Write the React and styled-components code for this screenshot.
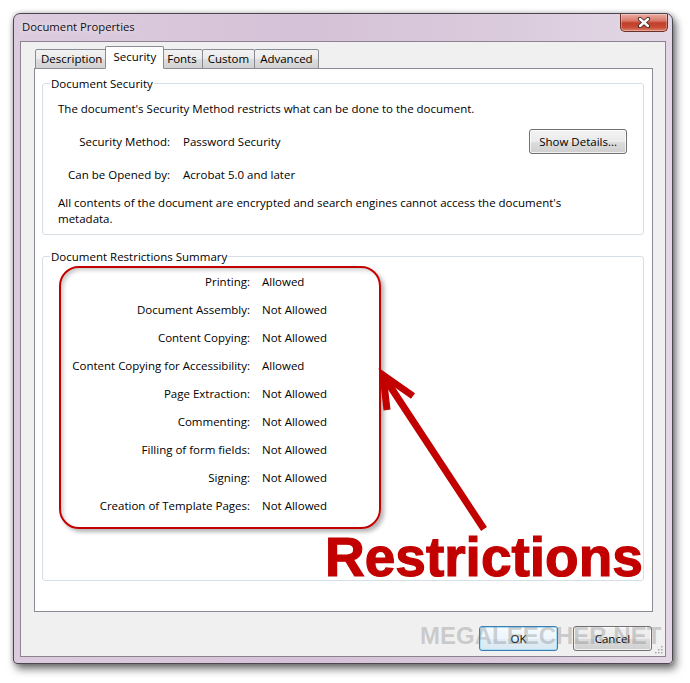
import React from 'react'
import styled, { createGlobalStyle } from 'styled-components'

const GlobalStyle = createGlobalStyle`
  html, body { margin: 0; padding: 0; background: #fff; }
  body {
    font-family: "Open Sans", "Noto Sans", sans-serif;
    font-size: 11.5px;
    color: #000;
  }
`

const Screen = styled.div`
  position: relative;
  width: 690px;
  height: 683px;
  box-sizing: border-box;
  padding: 13px 0 0 13px;
  overflow: hidden;
`

const Window = styled.div`
  width: 660px;
  height: 651px;
  box-sizing: border-box;
  border: 1px solid #4b4650;
  border-radius: 7px 7px 4px 4px;
  background: linear-gradient(90deg, #dccbde 0%, #d6c2d8 45%, #d9c9db 70%, #e3d7e5 100%);
  box-shadow: 3px 5px 9px rgba(0, 0, 0, 0.55), 0 0 5px rgba(0, 0, 0, 0.25);
  display: flex;
  flex-direction: column;
`

const TitleBar = styled.div`
  height: 27px;
  display: flex;
  justify-content: space-between;
  align-items: flex-start;
  padding: 0 4px 0 8px;
`

const Title = styled.span`
  font-size: 11.3px;
  line-height: 25px;
  color: #111;
  text-shadow: 0 0 6px rgba(255, 255, 255, 0.9);
`

const CloseButton = styled.div`
  width: 48px;
  height: 18px;
  box-sizing: border-box;
  border: 1px solid #6e2f28;
  border-top: none;
  border-radius: 0 0 5px 5px;
  background: linear-gradient(180deg, #e9ada0 0%, #d9786a 40%, #c2402a 52%, #c74a33 78%, #dd8672 100%);
  box-shadow: inset 0 0 0 1px rgba(255, 255, 255, 0.3);
  display: flex;
  align-items: center;
  justify-content: center;
`

const Client = styled.div`
  position: relative;
  flex: 1;
  margin: 0 6px 6px;
  background: #f0f0f0;
  border: 1px solid #8d8290;
  padding: 4px 12px 0 13px;
  display: flex;
  flex-direction: column;
`

const TabStrip = styled.div`
  display: flex;
  align-items: flex-end;
  height: 23px;
  padding-left: 1px;
  margin-bottom: -1px;
  position: relative;
  z-index: 1;
`

const Tab = styled.div`
  box-sizing: border-box;
  height: ${p => (p.$active ? 23 : 20)}px;
  line-height: ${p => (p.$active ? 19 : 18)}px;
  padding: 0 ${p => (p.$active ? 7 : 5)}px;
  margin: 0 ${p => (p.$active ? -2 : 0)}px 0 ${p => (p.$first ? 0 : p.$active ? -3 : -1)}px;
  border: 1px solid #898c95;
  border-bottom: ${p => (p.$active ? '1px solid #fff' : '1px solid #898c95')};
  border-radius: 2px 2px 0 0;
  background: ${p =>
    p.$active ? '#fff' : 'linear-gradient(180deg, #f2f2f2 0%, #ebebeb 50%, #dddddd 51%, #d2d2d2 100%)'};
  position: relative;
  z-index: ${p => (p.$active ? 2 : 1)};
`

const Panel = styled.div`
  height: 544px;
  box-sizing: border-box;
  background: #fff;
  border: 1px solid #898c95;
  padding: 7px 8px 30px 7px;
  display: flex;
  flex-direction: column;
`

const Group = styled.fieldset`
  margin: ${p => (p.$spaced ? '14px 0 0' : '0')};
  padding: 0;
  min-width: 0;
  border: 1px solid #d5dfe5;
  border-radius: 3px;
  ${p => p.$grow && 'flex: 1;'}
`

const Legend = styled.legend`
  margin-left: 7px;
  padding: 0 1px;
  line-height: 15px;
`

const GroupBody = styled.div`
  padding: 10px 16px 7px 15px;
`

const Line = styled.div`
  line-height: 16px;
`

const DetailGrid = styled.div`
  display: grid;
  grid-template-columns: 112px 1fr auto;
  column-gap: 13px;
  row-gap: 13px;
  align-items: center;
  margin: 12px 0;
  line-height: 16px;
`

const FieldLabel = styled.span`
  text-align: right;
  white-space: nowrap;
`

const Button = styled.button`
  height: 25px;
  min-width: ${p => p.$min || 0}px;
  box-sizing: border-box;
  padding: 0 9px;
  font: inherit;
  color: #000;
  border: 1px solid ${p => (p.$default ? '#3c7fb1' : '#707070')};
  border-radius: 3px;
  background: ${p =>
    p.$default
      ? 'linear-gradient(180deg, #f4fafd 0%, #eef6fb 50%, #e2eef6 51%, #d9e8f2 100%)'
      : 'linear-gradient(180deg, #f2f2f2 0%, #ebebeb 50%, #dddddd 51%, #cfcfcf 100%)'};
  box-shadow: inset 0 0 0 1px ${p => (p.$default ? '#a9dcf5' : 'rgba(255,255,255,0.75)')};
`

const RedBox = styled.div`
  margin: 2px 0 0 16px;
  width: 322px;
  box-sizing: border-box;
  border: 2px solid #c20000;
  border-radius: 20px;
  padding: 0 0 7px;
  display: grid;
  grid-template-columns: 189px auto;
  column-gap: 12px;
  line-height: 28px;
  box-shadow: 3px 3px 4px rgba(0, 0, 0, 0.3), inset 3px 3px 4px -1px rgba(0, 0, 0, 0.22);
`

const Footer = styled.div`
  display: flex;
  justify-content: flex-end;
  gap: 15px;
  margin-top: 14px;
  padding-right: 1px;
`

const Grip = styled.svg`
  position: absolute;
  right: 1px;
  bottom: 1px;
`

const Overlay = styled.svg`
  position: absolute;
  left: 0;
  top: 0;
  pointer-events: none;
`

const Callout = styled.div`
  position: absolute;
  left: 325px;
  top: 530px;
  font-family: "Liberation Sans", Arial, sans-serif;
  font-weight: bold;
  font-size: 55px;
  line-height: 55px;
  color: #c20000;
  -webkit-text-stroke: 1.2px #c20000;
  pointer-events: none;
`

const Watermark = styled.div`
  position: absolute;
  left: 420px;
  top: 624px;
  font-family: "Liberation Sans", Arial, sans-serif;
  font-weight: bold;
  font-size: 24px;
  line-height: 24px;
  color: rgba(120, 120, 120, 0.32);
  pointer-events: none;
`

const tabs = ['Description', 'Security', 'Fonts', 'Custom', 'Advanced']

const restrictions = [
  ['Printing:', 'Allowed'],
  ['Document Assembly:', 'Not Allowed'],
  ['Content Copying:', 'Not Allowed'],
  ['Content Copying for Accessibility:', 'Allowed'],
  ['Page Extraction:', 'Not Allowed'],
  ['Commenting:', 'Not Allowed'],
  ['Filling of form fields:', 'Not Allowed'],
  ['Signing:', 'Not Allowed'],
  ['Creation of Template Pages:', 'Not Allowed'],
]

const App = () => {
  return (
    <>
      <GlobalStyle />
      <Screen>
        <Window>
          <TitleBar>
            <Title>Document Properties</Title>
            <CloseButton>
              <svg width="14" height="11" viewBox="0 0 14 11">
                <path d="M3 2 L11 9 M11 2 L3 9" stroke="#3b2a2a" strokeWidth="4.2" strokeLinecap="round" />
                <path d="M3 2 L11 9 M11 2 L3 9" stroke="#fff" strokeWidth="2.4" strokeLinecap="round" />
              </svg>
            </CloseButton>
          </TitleBar>
          <Client>
            <TabStrip>
              {tabs.map((t, i) => (
                <Tab key={t} $first={i === 0} $active={t === 'Security'}>{t}</Tab>
              ))}
            </TabStrip>
            <Panel>
              <Group>
                <Legend>Document Security</Legend>
                <GroupBody>
                  <Line>The document's Security Method restricts what can be done to the document.</Line>
                  <DetailGrid>
                    <FieldLabel>Security Method:</FieldLabel>
                    <span>Password Security</span>
                    <Button>Show Details...</Button>
                    <FieldLabel>Can be Opened by:</FieldLabel>
                    <span>Acrobat 5.0 and later</span>
                  </DetailGrid>
                  <Line>
                    All contents of the document are encrypted and search engines cannot access the document's
                    <br />
                    metadata.
                  </Line>
                </GroupBody>
              </Group>
              <Group $spaced $grow>
                <Legend>Document Restrictions Summary</Legend>
                <RedBox>
                  {restrictions.map(([k, v]) => (
                    <React.Fragment key={k}>
                      <FieldLabel>{k}</FieldLabel>
                      <span>{v}</span>
                    </React.Fragment>
                  ))}
                </RedBox>
              </Group>
            </Panel>
            <Footer>
              <Button $default $min={79}>OK</Button>
              <Button $min={79}>Cancel</Button>
            </Footer>
            <Grip width="10" height="10" viewBox="0 0 10 10">
              {[[8, 2], [8, 5], [5, 5], [8, 8], [5, 8], [2, 8]].map(([x, y]) => (
                <rect key={`${x}-${y}`} x={x - 1} y={y - 1} width="1.5" height="1.5" fill="#a8a8a8" />
              ))}
            </Grip>
          </Client>
        </Window>

        <Overlay width="690" height="683" viewBox="0 0 690 683">
          <path d="M484 529 L384 377" stroke="#c20000" strokeWidth="7" fill="none" />
          <path d="M413 396 L383 375 L387 410" stroke="#c20000" strokeWidth="7" fill="none" strokeLinejoin="miter" />
        </Overlay>
        <Callout>Restrictions</Callout>
        <Watermark>MEGALEECHER.NET</Watermark>
      </Screen>
    </>
  )
}

export default App
